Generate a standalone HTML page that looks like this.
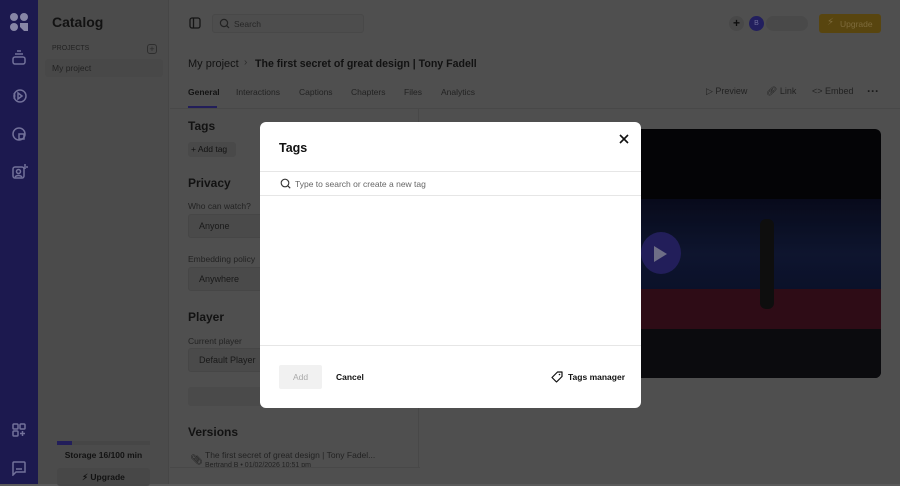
<!DOCTYPE html>
<html><head><style>
*{box-sizing:border-box;margin:0;padding:0}
body{width:900px;height:484px;overflow:hidden;font-family:"Liberation Sans",sans-serif;background:#5a5a5a;position:relative;color:#111}
.bg{position:absolute;left:0;top:0;width:900px;height:484px;background:#636363;filter:brightness(0.8)}
.abs{position:absolute}
.rail{left:0;top:0;width:38px;height:484px;background:#231f63}
.cat{left:38px;top:0;width:131px;height:484px;background:#5e5e5e;border-right:1px solid #575757}
.t{color:#161616}
.g{color:#2a2a2a}
.ico{stroke:#8f8dc0;fill:none;stroke-width:1.5}
.field{background:#5c5c5c;border:1px solid #585858;border-radius:3px;height:24px;font-size:9px;padding:6px 10px;color:#1f1f1f}
</style></head><body>
<div class="bg">
<div class="abs rail"></div>
<svg class="abs" style="left:9px;top:12px" width="20" height="20" viewBox="0 0 20 20"><g fill="#a9a7cf"><circle cx="5" cy="5" r="4"/><circle cx="15" cy="5" r="4"/><circle cx="5" cy="15" r="4"/><path d="M11 11h8v8h-4l-4-4z"/></g></svg>
<svg class="abs ico" style="left:11px;top:50px" width="16" height="16" viewBox="0 0 16 16"><rect x="2" y="7" width="12" height="7" rx="2"/><path d="M4 4h8M6 1h4"/></svg>
<svg class="abs ico" style="left:11px;top:88px" width="16" height="16" viewBox="0 0 16 16"><path d="M3 5a7 7 0 0 1 0 6M7 5l4 3-4 3z"/><circle cx="9" cy="8" r="6"/></svg>
<svg class="abs ico" style="left:11px;top:126px" width="16" height="16" viewBox="0 0 16 16"><circle cx="8" cy="8" r="6"/><path d="M8 8h5v5H8z"/></svg>
<svg class="abs ico" style="left:11px;top:163px" width="17" height="17" viewBox="0 0 17 17"><rect x="2" y="4" width="11" height="11" rx="2"/><circle cx="7.5" cy="8.5" r="2"/><path d="M4 14a4 3 0 0 1 7 0M14 1v5M16 3v2"/></svg>
<svg class="abs ico" style="left:11px;top:422px" width="16" height="16" viewBox="0 0 16 16"><rect x="2" y="2" width="5" height="5" rx="1"/><rect x="9" y="2" width="5" height="5" rx="1"/><rect x="2" y="9" width="5" height="5" rx="1"/><path d="M11.5 9v5M9 11.5h5"/></svg>
<svg class="abs ico" style="left:11px;top:460px" width="16" height="16" viewBox="0 0 16 16"><path d="M3 2h10a1 1 0 0 1 1 1v9H5l-3 3V3a1 1 0 0 1 1-1zM5 9h6"/></svg>

<div class="abs cat"></div>
<div class="abs t" style="left:52px;top:14px;font-size:14px;font-weight:bold">Catalog</div>
<div class="abs g" style="left:52px;top:45px;font-size:7px">PROJECTS</div>
<div class="abs" style="left:147px;top:44px;width:10px;height:10px;border:1px solid #3a3a3a;border-radius:3px;font-size:9px;line-height:8px;text-align:center;color:#333">+</div>
<div class="abs" style="left:45px;top:59px;width:118px;height:18px;background:#5a5a5a;border-radius:3px"></div>
<div class="abs g" style="left:52px;top:63px;font-size:8.5px">My project</div>
<div class="abs" style="left:57px;top:441px;width:93px;height:4px;background:#575757"></div>
<div class="abs" style="left:57px;top:441px;width:15px;height:4px;background:#2a2670"></div>
<div class="abs t" style="left:57px;top:450px;width:93px;text-align:center;font-size:8.5px;font-weight:bold">Storage 16/100 min</div>
<div class="abs t" style="left:57px;top:468px;width:93px;height:18px;background:#595959;border-radius:3px;font-size:8.5px;font-weight:bold;text-align:center;padding-top:4px">&#x26A1;&#xFE0E; Upgrade</div>

<svg class="abs" style="left:189px;top:17px" width="12" height="12" viewBox="0 0 12 12"><rect x="1" y="1" width="10" height="10" rx="2" fill="none" stroke="#1a1a1a" stroke-width="1.3"/><path d="M4.5 1v10" stroke="#1a1a1a" stroke-width="1.3"/></svg>
<div class="abs" style="left:212px;top:14px;width:152px;height:19px;background:#606060;border:1px solid #5a5a5a;border-radius:3px"></div>
<svg class="abs" style="left:219px;top:18px" width="11" height="11" viewBox="0 0 11 11"><circle cx="5" cy="5" r="3.6" fill="none" stroke="#2a2a2a" stroke-width="1.2"/><path d="M7.6 7.6l2.4 2.4" stroke="#2a2a2a" stroke-width="1.2"/></svg>
<div class="abs" style="left:234px;top:19px;font-size:8.5px;color:#2f2f2f">Search</div>
<div class="abs" style="left:729px;top:16px;width:15px;height:15px;border-radius:50%;background:#5a5a5a;color:#111;font-size:12px;text-align:center;line-height:14px;font-weight:bold">+</div>
<div class="abs" style="left:766px;top:16px;width:42px;height:15px;border-radius:8px;background:#5b5b5b"></div>
<div class="abs" style="left:749px;top:16px;width:15px;height:15px;border-radius:50%;background:#2a2775;color:#8886c0;font-size:7px;text-align:center;line-height:15px">B</div>
<div class="abs" style="left:819px;top:14px;width:62px;height:19px;background:#6e5613;border-radius:3px;color:#9c854a;font-size:8.5px;padding:5px 0 0 21px">Upgrade</div>
<div class="abs" style="left:827px;top:17px;font-size:10px;color:#9c854a">&#x26A1;&#xFE0E;</div>

<div class="abs t" style="left:188px;top:58px;font-size:11px">My project</div>
<div class="abs" style="left:244px;top:57px;font-size:10px;color:#333">&#x203A;</div>
<div class="abs t" style="left:255px;top:58px;font-size:10.6px;font-weight:bold">The first secret of great design | Tony Fadell</div>
<div class="abs t" style="left:188px;top:87px;font-size:8.5px;font-weight:bold">General</div>
<div class="abs" style="left:188px;top:106px;width:29px;height:2px;background:#2a2670"></div>
<div class="abs g" style="left:236px;top:87px;font-size:8.5px">Interactions</div>
<div class="abs g" style="left:299px;top:87px;font-size:8.5px">Captions</div>
<div class="abs g" style="left:351px;top:87px;font-size:8.5px">Chapters</div>
<div class="abs g" style="left:404px;top:87px;font-size:8.5px">Files</div>
<div class="abs g" style="left:441px;top:87px;font-size:8.5px">Analytics</div>
<div class="abs" style="left:170px;top:108px;width:730px;height:1px;background:#5a5a5a"></div>
<div class="abs g" style="left:706px;top:86px;font-size:9px">&#x25B7; Preview</div>
<div class="abs g" style="left:766px;top:86px;font-size:9px">&#x1F517;&#xFE0E; Link</div>
<div class="abs g" style="left:812px;top:86px;font-size:9px">&lt;&gt; Embed</div>
<div class="abs" style="left:867px;top:84px;font-size:12px;color:#222;font-weight:bold">&middot;&middot;&middot;</div>
<div class="abs" style="left:418px;top:109px;width:1px;height:375px;background:#5a5a5a"></div>

<div class="abs t" style="left:188px;top:119px;font-size:12px;font-weight:bold">Tags</div>
<div class="abs t" style="left:188px;top:142px;width:48px;height:15px;background:#5b5b5b;border-radius:3px;font-size:8.5px;padding:2px 0 0 3px">+ Add tag</div>
<div class="abs t" style="left:188px;top:176px;font-size:12px;font-weight:bold">Privacy</div>
<div class="abs g" style="left:188px;top:201px;font-size:8.5px">Who can watch?</div>
<div class="abs field" style="left:188px;top:214px;width:80px">Anyone</div>
<div class="abs g" style="left:188px;top:254px;font-size:8.5px">Embedding policy</div>
<div class="abs field" style="left:188px;top:267px;width:80px">Anywhere</div>
<div class="abs t" style="left:188px;top:310px;font-size:12px;font-weight:bold">Player</div>
<div class="abs g" style="left:188px;top:336px;font-size:8.5px">Current player</div>
<div class="abs field" style="left:188px;top:348px;width:80px">Default Player</div>
<div class="abs" style="left:188px;top:387px;width:228px;height:19px;background:#5c5c5c;border-radius:3px"></div>
<div class="abs t" style="left:188px;top:425px;font-size:12px;font-weight:bold">Versions</div>
<div class="abs" style="left:190px;top:455px;font-size:10px;color:#222">&#x1F4CE;&#xFE0E;</div>
<div class="abs g" style="left:205px;top:450px;font-size:8.5px">The first secret of great design | Tony Fadel...</div>
<div class="abs g" style="left:205px;top:462px;font-size:7px">Bertrand B • 01/02/2026 10:51 pm</div>
<div class="abs" style="left:170px;top:467px;width:250px;height:17px;background:#636363;border-top:1px solid #5a5a5a"></div>

<div class="abs" style="left:600px;top:129px;width:281px;height:249px;border-radius:6px;overflow:hidden;background:#050508">
 <div class="abs" style="left:0;top:70px;width:281px;height:110px;background:linear-gradient(#0a0d22,#111a3a 50%,#0c1230)"></div>
 <div class="abs" style="left:40px;top:160px;width:241px;height:40px;background:#3a0f1c"></div>
 <div class="abs" style="left:0;top:200px;width:281px;height:49px;background:#0e0e12"></div>
 <div class="abs" style="left:160px;top:90px;width:14px;height:90px;background:#111;border-radius:6px"></div>
</div>
<div class="abs" style="left:641px;top:232px;width:40px;height:42px;border-radius:50%;background:#2a2670"></div>
<div class="abs" style="left:654px;top:246px;width:0;height:0;border-left:13px solid #8a89a8;border-top:8px solid transparent;border-bottom:8px solid transparent"></div>
</div>

<div class="abs" style="left:260px;top:122px;width:381px;height:286px;background:#fff;border-radius:6px;overflow:hidden">
 <div class="abs" style="left:19px;top:19px;font-size:12.5px;font-weight:bold;color:#111">Tags</div>
 <svg class="abs" style="left:359px;top:12px" width="10" height="10" viewBox="0 0 10 10"><path d="M1 1l8 8M9 1l-8 8" stroke="#111" stroke-width="1.6"/></svg>
 <div class="abs" style="left:0;top:49px;width:381px;height:1px;background:#e6e6e6"></div>
 <svg class="abs" style="left:20px;top:56px" width="11" height="11" viewBox="0 0 11 11"><circle cx="5" cy="5" r="3.8" fill="none" stroke="#333" stroke-width="1.1"/><path d="M7.8 7.8l2.4 2.4" stroke="#333" stroke-width="1.1"/></svg>
 <div class="abs" style="left:35px;top:57px;font-size:8.5px;color:#666">Type to search or create a new tag</div>
 <div class="abs" style="left:0;top:73px;width:381px;height:1px;background:#e6e6e6"></div>
 <div class="abs" style="left:0;top:223px;width:381px;height:1px;background:#e6e6e6"></div>
 <div class="abs" style="left:19px;top:243px;width:43px;height:24px;background:#f1f1f1;border-radius:2px;font-size:8.5px;color:#aaa;text-align:center;line-height:24px">Add</div>
 <div class="abs" style="left:76px;top:250px;font-size:8.5px;font-weight:bold;color:#111">Cancel</div>
 <svg class="abs" style="left:291px;top:249px" width="12" height="12" viewBox="0 0 12 12"><path d="M6.5 1H11v4.5L5.5 11 1 6.5z" fill="none" stroke="#111" stroke-width="1.2" stroke-linejoin="round"/><circle cx="8.5" cy="3.5" r=".8" fill="#111"/></svg>
 <div class="abs" style="left:308px;top:250px;font-size:8.5px;font-weight:bold;color:#111">Tags manager</div>
</div>
</body></html>
